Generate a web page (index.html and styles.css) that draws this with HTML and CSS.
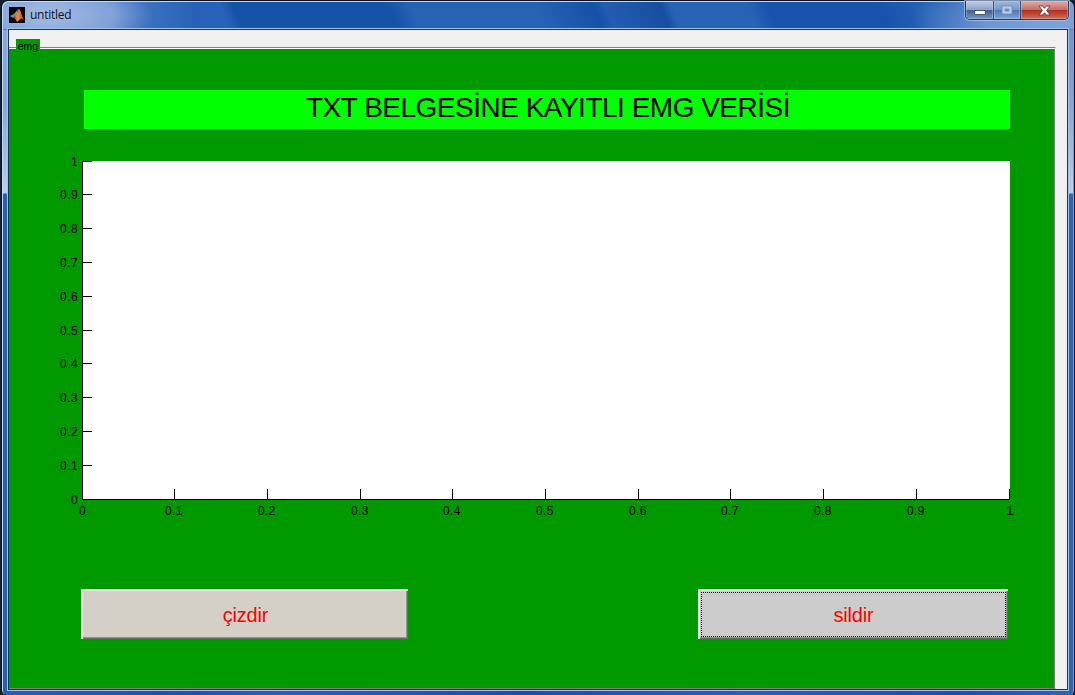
FILE: index.html
```html
<!DOCTYPE html>
<html lang="tr">
<head>
<meta charset="utf-8">
<title>untitled</title>
<link rel="stylesheet" href="styles.css">
</head>
<body>
<div class="window">
  <header class="titlebar">
    <svg class="logo" width="16" height="16" viewBox="0 0 16 16">
      <defs>
        <linearGradient id="flame" x1="0" x2="1"><stop offset="0" stop-color="#7c2818"/><stop offset=".4" stop-color="#f48b35"/><stop offset="1" stop-color="#c44a18"/></linearGradient>
      </defs>
      <rect width="16" height="16" fill="#050308"/>
      <path d="M1 9L5 7L9 2L7.5 8L4 11Z" fill="#5c9db5"/>
      <path d="M4 11L7 8L10 1.5C12 4 13 10 15 13L12 11.500L8 15L6.500 12Z" fill="url(#flame)"/>
    </svg>
    <span class="caption">untitled</span>
    <div class="controls">
      <span class="control minimize"><svg width="12" height="5" viewBox="0 0 12 5"><rect x=".5" y=".5" width="11" height="4" rx=".5" fill="#fff" stroke="#4d566e"/></svg></span>
      <span class="control maximize"><svg width="12" height="10" viewBox="0 0 12 10"><path d="M1 1H11V9H1ZM4 4V6H8V4Z" fill="#b9cce6" fill-rule="evenodd" stroke="#7089b5" stroke-width=".8"/></svg></span>
      <span class="control close"><svg width="13" height="11" viewBox="0 0 13 11"><path d="M1 1H4.700L6.500 3.300L8.300 1H12L8.600 5.500L12 10H8.300L6.500 7.700L4.700 10H1L4.400 5.500Z" fill="#fff" stroke="#5e4552" stroke-width=".9"/></svg></span>
    </div>
  </header>
  <main class="client">
    <section class="panel">
      <span class="legend">emg</span>
      <h1 class="heading"><span>TXT BELGESİNE KAYITLI EMG VERİSİ</span></h1>
      <svg class="plot" width="980" height="370" viewBox="50 150 980 370">
        <rect x="82" y="161" width="928" height="339" fill="#fff"/>
        <g fill="#000" shape-rendering="crispEdges">
          <rect x="82" y="161" width="1" height="339"/><rect x="82" y="499" width="928" height="1"/>
          <rect x="82" y="161" width="10" height="1"/><rect x="82" y="194" width="10" height="1"/><rect x="82" y="228" width="10" height="1"/><rect x="82" y="262" width="10" height="1"/><rect x="82" y="296" width="10" height="1"/><rect x="82" y="330" width="10" height="1"/><rect x="82" y="363" width="10" height="1"/><rect x="82" y="397" width="10" height="1"/><rect x="82" y="431" width="10" height="1"/><rect x="82" y="465" width="10" height="1"/>
          <rect x="174" y="489" width="1" height="10"/><rect x="267" y="489" width="1" height="10"/><rect x="360" y="489" width="1" height="10"/><rect x="452" y="489" width="1" height="10"/><rect x="545" y="489" width="1" height="10"/><rect x="638" y="489" width="1" height="10"/><rect x="730" y="489" width="1" height="10"/><rect x="823" y="489" width="1" height="10"/><rect x="916" y="489" width="1" height="10"/><rect x="1009" y="489" width="1" height="10"/>
        </g>
        <g class="ticks vertical">
          <text x="78" y="166">1</text><text x="78" y="199">0.9</text><text x="78" y="233">0.8</text><text x="78" y="267">0.7</text><text x="78" y="301">0.6</text><text x="78" y="335">0.5</text><text x="78" y="368">0.4</text><text x="78" y="402">0.3</text><text x="78" y="436">0.2</text><text x="78" y="470">0.1</text><text x="78" y="504">0</text>
        </g>
        <g class="ticks horizontal">
          <text x="82.500" y="515">0</text><text x="174" y="515">0.1</text><text x="267" y="515">0.2</text><text x="360" y="515">0.3</text><text x="452" y="515">0.4</text><text x="545" y="515">0.5</text><text x="638" y="515">0.6</text><text x="730" y="515">0.7</text><text x="823" y="515">0.8</text><text x="916" y="515">0.9</text><text x="1010" y="515">1</text>
        </g>
      </svg>
      <div class="actions">
        <button class="button draw">çizdir</button>
        <button class="button erase"><span class="focus">sildir</span></button>
      </div>
    </section>
  </main>
</div>
</body>
</html>
```
FILE: styles.css
```css
* { box-sizing: border-box; }
body {
  margin: 0;
  overflow: hidden;
  background: #14232f;
  font-family: "Liberation Sans", Arial, sans-serif;
}
.window {
  width: 1074px;
  height: 695px;
  margin-left: 1px;
  padding: 0 6px 5px 6px;
  display: flex;
  flex-direction: column;
  border: 1px solid #06101f;
  border-bottom: 0;
  border-radius: 7px 7px 5px 5px;
  box-shadow: inset 1px 1px 0 #c3dcf3, inset -1px 0 0 #6ea2d5;
  background:
    linear-gradient(#0000 28px, #88a9db 29px, #82a5db 100px, #b9cfec 192px, #0000 193px) 0 0 / 7px 100% no-repeat,
    linear-gradient(#0000 28px, #6e94d1 29px, #82a5db 100px, #b9cfec 192px, #0000 193px) 100% 0 / 6px 100% no-repeat,
    radial-gradient(ellipse 150px 60px at 45px 14px, #a5bce2 0, #7fa1d8 45%, #4377c4aa 70%, #0000 100%) 0 0 / 100% 28px no-repeat,
    radial-gradient(ellipse 150px 60px at 1060px 22px, #7da2dc 0, #6f96d4 50%, #0000 100%) 0 0 / 100% 28px no-repeat,
    linear-gradient(67deg, #2862b6 0 210px, #1553a8 222px 365px, #2862b5 385px 500px, #1551a6 553px, #235cb0 564px, #174ea2 615px, #2863b6 625px 695px, #1752ac 715px 815px, #2862b6 860px) 0 0 / 100% 28px no-repeat,
    linear-gradient(90deg, #2461b3 0, #1856a8 180px, #2862b5 280px, #1553a8 520px, #2862b5 750px, #1653aa 950px, #2a66b8);
}
.titlebar {
  height: 28px;
  flex: none;
  display: flex;
  align-items: flex-start;
}
.logo { margin: 6px 0 0 1px; }
.caption {
  margin: 6px 0 0 5px;
  font: 12px/16px "Open Sans", "Noto Sans", sans-serif;
  letter-spacing: -.25px;
  color: #101323;
}
.controls {
  height: 19px;
  margin: 0 -1px 0 auto;
  display: flex;
  border: 1px solid #26395f;
  border-top: 0;
  border-radius: 0 0 5px 5px;
  box-shadow: 0 0 0 1px #b4cbe8aa;
  overflow: hidden;
}
.control {
  width: 28px;
  display: flex;
  align-items: center;
  justify-content: center;
  border-right: 1px solid #374e78;
  box-shadow: inset 0 0 0 1px #c3d4e966;
}
.minimize { background: linear-gradient(#c1cfe6, #8ba2c8 48%, #43608f 52%, #7298c5); }
.minimize svg { margin-top: 5px; }
.maximize { width: 27px; background: linear-gradient(#9db7df, #7798cb 48%, #4f78b6 52%, #80a6d8); }
.close { width: 47px; border-right: 0; background: linear-gradient(#dfada7, #ca6d64 48%, #ad2f22 52%, #d66d50); }
.client {
  flex: 1;
  padding-top: 17px;
  border: 1px solid #17345f;
  background: #f0f0f0;
  box-shadow: 0 0 0 1px #a3c4eb;
}
.panel {
  position: relative;
  width: 1047px;
  height: 642px;
  display: flex;
  flex-direction: column;
  align-items: flex-start;
  border-top: 1px solid #808080;
  border-right: 1px solid #fff;
  border-bottom: 1px solid #808080;
  box-shadow: inset 0 1px 0 #fff, inset -1px 0 0 #808080;
  background: #009900;
}
.legend {
  position: absolute;
  left: 7px;
  top: -9px;
  width: 24px;
  height: 11px;
  background: #009900;
  font-size: 10.5px;
  line-height: 14px;
  text-align: center;
}
.heading {
  width: 926px;
  height: 39px;
  margin: 42px 0 0 75px;
  background: #00ff00;
  text-align: center;
  font-size: 28px;
  font-weight: 400;
  letter-spacing: -.5px;
  line-height: 35px;
  white-space: nowrap;
}
.heading span { margin-left: 2px; }
.plot { margin: 21px 0 0 41px; flex: none; }
.ticks { font-size: 12px; letter-spacing: .4px; }
.vertical { text-anchor: end; }
.horizontal { text-anchor: middle; }
.actions {
  width: 927px;
  margin: 69px 0 0 72px;
  display: flex;
  justify-content: space-between;
}
.button {
  height: 50px;
  padding: 0;
  border: 0;
  background: #d4d0c8;
  box-shadow: inset 2px 2px 0 #f0eeea, inset -1px -1px 0 #696969, inset -2px -2px 0 #929292;
  font: 20px/24px "Liberation Sans", Arial, sans-serif;
  letter-spacing: -.2px;
  color: #ff0000;
}
.draw { width: 327px; padding: 1px 0 0 2px; }
.erase { width: 310px; padding: 3px 2px 3px 3px; background: #cccccc; }
.focus {
  height: 45px;
  display: flex;
  align-items: center;
  justify-content: center;
  padding-top: 1px;
  border: 1px dotted #000;
}
```
